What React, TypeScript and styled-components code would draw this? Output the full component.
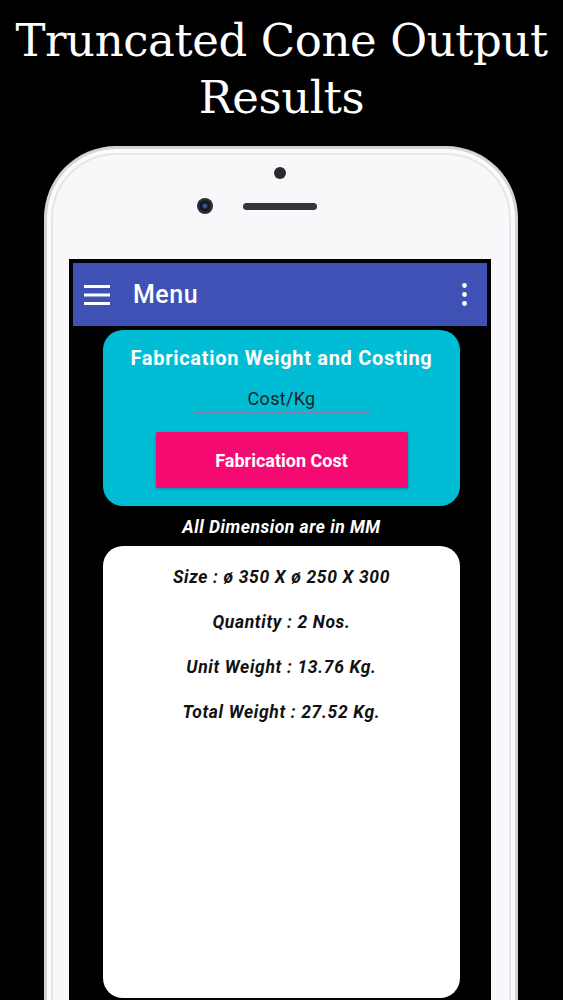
import styled, { createGlobalStyle } from "styled-components";

const GlobalStyle = createGlobalStyle`
  html, body {
    margin: 0;
    padding: 0;
    background: #000;
    height: 1000px;
    overflow: hidden;
  }
  * {
    box-sizing: border-box;
  }
`;

const Page = styled.div`
  width: 563px;
  height: 1000px;
  overflow: hidden;
  background: #000;
  display: flex;
  flex-direction: column;
`;

const Heading = styled.h1`
  margin: 0;
  padding-top: 12px;
  text-align: center;
  color: #fff;
  font-family: "DejaVu Serif", "Liberation Serif", serif;
  font-weight: 400;
  font-size: 45px;
  letter-spacing: -0.4px;
  line-height: 57px;
`;

const Phone = styled.div`
  margin: 20px 0 0 44px;
  width: 474px;
  height: 900px;
  flex-shrink: 0;
  border: 3px solid #d4d4d8;
  border-bottom: none;
  border-radius: 72px 72px 0 0;
  background: #f8f7f9;
  box-shadow: inset 0 0 0 4px #fbfbfc, inset 0 0 0 6px #e6e6ea;
  padding: 0 24px 0 22px;
  display: flex;
  flex-direction: column;
`;

const TopArea = styled.div`
  height: 110px;
  padding-top: 18px;
  display: flex;
  flex-direction: column;
  align-items: center;
  gap: 19px;
`;

const Sensor = styled.div`
  width: 12px;
  height: 12px;
  border-radius: 50%;
  background: #2a2a2e;
`;

const CameraRow = styled.div`
  display: flex;
  align-items: center;
  gap: 30px;
`;

const Camera = styled.div`
  width: 16px;
  height: 16px;
  border-radius: 50%;
  background: radial-gradient(circle at 50% 50%, #3b4f8a 0 2px, #141826 3px 5px, #2c2c33 6px);
`;

const Speaker = styled.div`
  width: 74px;
  height: 7px;
  border-radius: 4px;
  background: #34343a;
`;

const Spacer = styled.div`
  width: 16px;
`;

const Screen = styled.div`
  flex: 1;
  background: #000;
  padding: 4px 4px 0;
  display: flex;
  flex-direction: column;
`;

const AppBar = styled.div`
  height: 63px;
  background: #3f51b5;
  display: flex;
  align-items: center;
  padding: 0 20px 0 11px;
  color: #fff;
`;

const BarTitle = styled.div`
  flex: 1;
  margin-left: 23px;
  font-family: Roboto, "Noto Sans", sans-serif;
  font-weight: 500;
  font-size: 25px;
  letter-spacing: 0.5px;
  line-height: 30px;
`;

const Content = styled.div`
  flex: 1;
  display: flex;
  flex-direction: column;
  align-items: center;
  padding: 4px 0 0 3px;
  font-family: Roboto, "Noto Sans", sans-serif;
`;

const CostCard = styled.div`
  width: 357px;
  height: 176px;
  background: #00bcd4;
  border-radius: 20px;
  padding: 16px 0 18px;
  display: flex;
  flex-direction: column;
  align-items: center;
`;

const CardTitle = styled.div`
  color: #fff;
  font-weight: 700;
  font-size: 20px;
  letter-spacing: 0.7px;
  line-height: 24px;
`;

const CostInput = styled.div`
  margin-top: 17px;
  width: 177px;
  padding-bottom: 1px;
  border-bottom: 2px solid #8e7caa;
  text-align: center;
  color: #1e1e1e;
  font-size: 18px;
  letter-spacing: 0.3px;
  line-height: 24px;
`;

const CostButton = styled.button`
  margin-top: 18px;
  width: 252px;
  height: 56px;
  border: 0;
  border-radius: 2px;
  background: #f50a72;
  color: #fff;
  font-family: Roboto, "Noto Sans", sans-serif;
  font-weight: 700;
  font-size: 18px;
  box-shadow: 0 1px 3px rgba(0, 0, 0, 0.25);
`;

const Note = styled.div`
  margin-top: 11px;
  color: #fff;
  font-style: italic;
  font-weight: 700;
  font-size: 17.5px;
  letter-spacing: 0.5px;
  line-height: 20px;
`;

const ResultCard = styled.div`
  margin-top: 9px;
  width: 357px;
  height: 452px;
  flex-shrink: 0;
  background: #fff;
  border-radius: 20px;
  padding-top: 9px;
  display: flex;
  flex-direction: column;
  align-items: center;
`;

const ResultLine = styled.div`
  color: #111;
  font-style: italic;
  font-weight: 700;
  font-size: 17.5px;
  letter-spacing: 0.65px;
  line-height: 45px;
`;

function Hamburger() {
  return (
    <svg width="26" height="20" viewBox="0 0 26 20" fill="#fff">
      <rect x="0" y="0" width="26" height="3" />
      <rect x="0" y="8.5" width="26" height="3" />
      <rect x="0" y="17" width="26" height="3" />
    </svg>
  );
}

function MoreDots() {
  return (
    <svg width="5" height="24" viewBox="0 0 5 24" fill="#fff">
      <circle cx="2.5" cy="2.5" r="2.4" />
      <circle cx="2.5" cy="11.5" r="2.4" />
      <circle cx="2.5" cy="20.5" r="2.4" />
    </svg>
  );
}

const results = [
  "Size : ø 350 X ø 250 X 300",
  "Quantity : 2 Nos.",
  "Unit Weight : 13.76 Kg.",
  "Total Weight : 27.52 Kg.",
];

export default function App() {
  return (
    <Page>
      <GlobalStyle />
      <Heading>
        Truncated Cone Output
        <br />
        Results
      </Heading>
      <Phone>
        <TopArea>
          <Sensor />
          <CameraRow>
            <Camera />
            <Speaker />
            <Spacer />
          </CameraRow>
        </TopArea>
        <Screen>
          <AppBar>
            <Hamburger />
            <BarTitle>Menu</BarTitle>
            <MoreDots />
          </AppBar>
          <Content>
            <CostCard>
              <CardTitle>Fabrication Weight and Costing</CardTitle>
              <CostInput>Cost/Kg</CostInput>
              <CostButton>Fabrication Cost</CostButton>
            </CostCard>
            <Note>All Dimension are in MM</Note>
            <ResultCard>
              {results.map((r) => (
                <ResultLine key={r}>{r}</ResultLine>
              ))}
            </ResultCard>
          </Content>
        </Screen>
      </Phone>
    </Page>
  );
}
